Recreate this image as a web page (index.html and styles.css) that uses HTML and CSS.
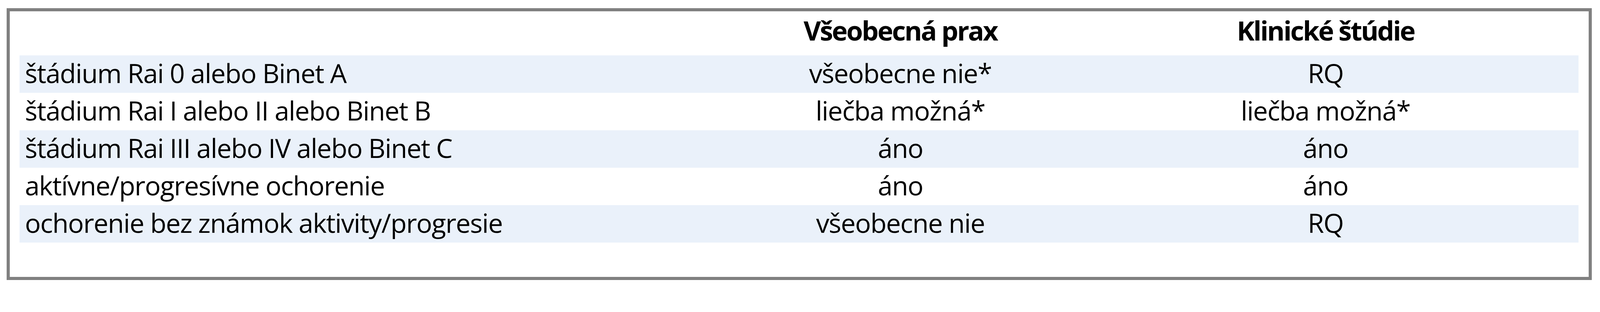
FILE: index.html
```html
<!DOCTYPE html>
<html lang="sk">
<head>
<meta charset="utf-8">
<title>Tabuľka</title>
<link rel="stylesheet" href="styles.css">
</head>
<body>
<div class="frame">
  <table class="grid">
    <colgroup>
      <col class="c-label">
      <col class="c-prax">
      <col class="c-studie">
    </colgroup>
    <thead>
      <tr class="head">
        <th></th>
        <th>Všeobecná prax</th>
        <th>Klinické štúdie</th>
      </tr>
    </thead>
    <tbody>
      <tr class="band">
        <td class="label">štádium Rai 0 alebo Binet A</td>
        <td>všeobecne nie*</td>
        <td>RQ</td>
      </tr>
      <tr>
        <td class="label">štádium Rai I alebo II alebo Binet B</td>
        <td>liečba možná*</td>
        <td>liečba možná*</td>
      </tr>
      <tr class="band">
        <td class="label">štádium Rai III alebo IV alebo Binet C</td>
        <td>áno</td>
        <td>áno</td>
      </tr>
      <tr>
        <td class="label">aktívne/progresívne ochorenie</td>
        <td>áno</td>
        <td>áno</td>
      </tr>
      <tr class="band">
        <td class="label">ochorenie bez známok aktivity/progresie</td>
        <td>všeobecne nie</td>
        <td>RQ</td>
      </tr>
    </tbody>
  </table>
</div>
</body>
</html>
```

FILE: styles.css
```css
html, body {
  margin: 0;
  padding: 0;
  background: #ffffff;
}

body {
  font-family: "Open Sans", "Noto Sans", sans-serif;
  color: #000000;
}

.frame {
  box-sizing: border-box;
  width: 4058px;
  margin: 21px 0 0 16.5px;
  border: 8px solid #808080;
  padding: 0 25.5px 88px 25.5px;
}

.grid {
  width: 100%;
  border-collapse: collapse;
  border-spacing: 0;
  table-layout: fixed;
}

.c-label { width: 1814px; }
.c-prax { width: 882px; }
.c-studie { width: 1295px; }

.head th {
  height: 113px;
  padding: 11.5px 0 0 0;
  vertical-align: top;
  text-align: center;
  font-size: 68.5px;
  font-weight: 700;
  line-height: 73px;
  letter-spacing: -3.2px;
  box-sizing: border-box;
}

.grid td {
  height: 96px;
  padding: 0;
  vertical-align: top;
  text-align: center;
  font-size: 67.7px;
  line-height: 91.5px;
  letter-spacing: -1.45px;
  white-space: nowrap;
}

.grid td.label {
  text-align: left;
  padding-left: 13.7px;
}

.band td {
  background: #eaf1fa;
}
```
